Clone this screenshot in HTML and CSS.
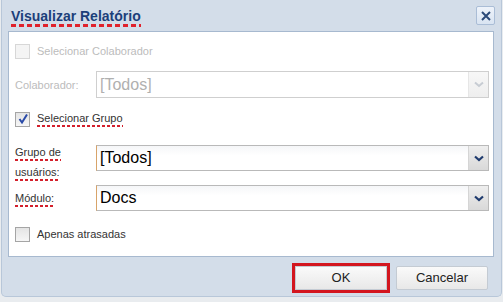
FILE: index.html
```html
<!DOCTYPE html>
<html lang="pt">
  <head>
    <meta charset="UTF-8" />
    <title>Visualizar Relatório</title>
    <link rel="stylesheet" href="styles.css">
  </head>
  <body>
    <div class="window">
      <div class="titlebar">
        <span class="title marked-big">Visualizar Relatório</span>
        <span class="close-btn">
          <svg width="12" height="12" viewBox="0 0 12 12">
            <path d="M2 2 L10 10 M10 2 L2 10" stroke="#2b4a78" stroke-width="2" fill="none" />
          </svg>
        </span>
      </div>

      <div class="content">
        <div class="row row-check row-1 disabled">
          <span class="checkbox"></span>
          <span class="check-label">Selecionar Colaborador</span>
        </div>

        <div class="row row-field row-2 disabled">
          <label class="field-label">Colaborador:</label>
          <div class="select">
            <span class="select-text">[Todos]</span>
            <span class="select-arrow">
              <svg width="10" height="7" viewBox="0 0 10 7">
                <path d="M1 1.5 L5 5 L9 1.5" stroke="#c7ccd3" stroke-width="2" fill="none" />
              </svg>
            </span>
          </div>
        </div>

        <div class="row row-check row-3">
          <span class="checkbox checked">
            <svg width="12" height="12" viewBox="0 0 12 12">
              <path d="M2.5 6 L5 9.5 L10 1.5" stroke="#2a4aa8" stroke-width="2" fill="none" />
            </svg>
          </span>
          <span class="check-label marked">Selecionar Grupo</span>
        </div>

        <div class="row row-field row-4">
          <label class="field-label two-lines">
            <span class="marked">Grupo de</span>
            <span class="marked">usuários:</span>
          </label>
          <div class="select active">
            <span class="select-text">[Todos]</span>
            <span class="select-arrow">
              <svg width="10" height="7" viewBox="0 0 10 7">
                <path d="M1 1.5 L5 5 L9 1.5" stroke="#1f3b6e" stroke-width="2.2" fill="none" />
              </svg>
            </span>
          </div>
        </div>

        <div class="row row-field row-5">
          <label class="field-label"><span class="marked">Módulo:</span></label>
          <div class="select active">
            <span class="select-text">Docs</span>
            <span class="select-arrow">
              <svg width="10" height="7" viewBox="0 0 10 7">
                <path d="M1 1.5 L5 5 L9 1.5" stroke="#1f3b6e" stroke-width="2.2" fill="none" />
              </svg>
            </span>
          </div>
        </div>

        <div class="row row-check row-6">
          <span class="checkbox"></span>
          <span class="check-label">Apenas atrasadas</span>
        </div>
      </div>

      <div class="footer">
        <button class="btn btn-ok">OK</button>
        <button class="btn">Cancelar</button>
      </div>
    </div>
  </body>
</html>
```

FILE: styles.css
```css
body {
  margin: 0;
  background-color: #e9ecef;
  font-family: "Liberation Sans", Arial, sans-serif;
}

.window {
  width: 501px;
  height: 297px;
  margin-left: 1px;
  background-color: #d3dde9;
  border: 1px solid #b8c7d9;
  border-top: none;
  border-radius: 0 0 5px 5px;
  box-sizing: border-box;
  display: flex;
  flex-direction: column;
}

.titlebar {
  height: 31px;
  display: flex;
  align-items: flex-start;
  justify-content: space-between;
  padding: 0 6px 0 9px;
  flex-shrink: 0;
}

.title {
  font-size: 14px;
  font-weight: bold;
  color: #1c3f7a;
  margin-top: 8px;
  padding-bottom: 3px;
}

.marked-big {
  background-image: repeating-linear-gradient(to right, #e0222c 0 5px, transparent 5px 8px);
  background-size: 100% 3px;
  background-repeat: no-repeat;
  background-position: left bottom;
}

.marked {
  background-image: repeating-linear-gradient(to right, #d4202c 0 3px, transparent 3px 5px);
  background-size: 100% 2px;
  background-repeat: no-repeat;
  background-position: left bottom;
  padding-bottom: 3px;
}

.close-btn {
  width: 17px;
  height: 17px;
  margin-top: 6px;
  border: 1px solid #aabdd6;
  border-radius: 2px;
  background: linear-gradient(#eef3fa, #d9e4f2);
  display: flex;
  align-items: center;
  justify-content: center;
}

.content {
  height: 226px;
  flex-shrink: 0;
  margin: 0 7px 0 6px;
  background-color: #ffffff;
  border: 1px solid #a7b9cf;
  box-sizing: border-box;
  padding: 10px 4px 0 6px;
}

.row {
  display: flex;
  align-items: center;
}

.row-check {
  height: 16px;
}

.row-1 { margin-top: 1px; }
.row-2 { margin-top: 12px; }
.row-3 { margin-top: 13px; }
.row-4 { margin-top: 18px; }
.row-5 { margin-top: 14px; }
.row-6 { margin-top: 15px; }

.row-4 {
  height: 26px;
  align-items: flex-start;
}

.checkbox {
  width: 13px;
  height: 13px;
  border: 1px solid #a5a5a5;
  background: linear-gradient(#e4e4e4, #f6f6f6);
  display: flex;
  align-items: center;
  justify-content: center;
  margin-right: 7px;
}

.disabled .checkbox {
  border-color: #d7d7d7;
  background: #f4f4f4;
}

.check-label {
  font-size: 11px;
  color: #333333;
}

.disabled .check-label,
.disabled .field-label {
  color: #bcbcbc;
}

.field-label {
  width: 81px;
  font-size: 11px;
  color: #333333;
  flex-shrink: 0;
}

.two-lines {
  display: flex;
  flex-direction: column;
  align-items: flex-start;
  gap: 5px;
  margin-top: 1px;
}

.select {
  flex: 1;
  height: 27px;
  border: 1px solid #cfcfcf;
  box-sizing: border-box;
  display: flex;
  align-items: stretch;
  background: #ffffff;
}

.select.active {
  height: 26px;
  border-color: #b9b9b9;
  border-left-color: #d8a46a;
  background: linear-gradient(#f5f6f8, #ffffff 40%);
}

.select-text {
  flex: 1;
  font-size: 16px;
  padding-left: 3px;
  display: flex;
  align-items: center;
  color: #000000;
}

.disabled .select-text {
  color: #b0b0b0;
}

.select-arrow {
  width: 19px;
  border-left: 1px solid #e6e6e6;
  background: linear-gradient(#f7f7f7, #eeeeee);
  display: flex;
  align-items: center;
  justify-content: center;
}

.active .select-arrow {
  border-left-color: #d5d5d5;
  background: linear-gradient(#eeeeee, #d9d9d9);
}

.footer {
  flex: 1;
  display: flex;
  justify-content: flex-end;
  align-items: center;
  padding-right: 13px;
  padding-top: 2px;
}

.btn {
  width: 92px;
  height: 24px;
  border: 1px solid #c4cbd3;
  border-radius: 2px;
  background: linear-gradient(#fafafa, #e8e8e8);
  font-family: "Liberation Sans", Arial, sans-serif;
  font-size: 13px;
  color: #222222;
  margin-left: 9px;
}

.btn-ok {
  border-radius: 0;
  outline: 3px solid #d3161f;
  outline-offset: 0;
}
```
